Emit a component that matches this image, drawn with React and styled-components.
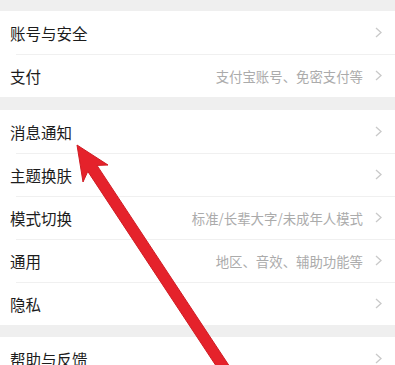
import React from "react";
import styled, { createGlobalStyle } from "styled-components";

const Global = createGlobalStyle`
  html, body { margin: 0; padding: 0; background: #efefef; }
  body { font-family: "Noto Sans CJK SC", "Noto Sans", sans-serif; overflow: hidden; }
`;

const Page = styled.div`
  position: relative;
  width: 395px;
  height: 365px;
  overflow: hidden;
  background: #efefef;
  display: flex;
  flex-direction: column;
`;

const Gap = styled.div`
  height: ${(p) => p.$h}px;
  flex: none;
`;

const Section = styled.div`
  background: #fff;
  display: flex;
  flex-direction: column;
  flex: none;
`;

const Row = styled.div`
  position: relative;
  height: 43px;
  display: flex;
  align-items: center;
  padding: 0 13px 0 10px;
  & + &::before {
    content: "";
    position: absolute;
    left: 16px;
    right: 0;
    top: 0;
    height: 1px;
    background: #f0f0f0;
  }
`;

const Title = styled.span`
  font-size: 15.5px;
  color: #1c1c1c;
  flex: 1;
  white-space: nowrap;
`;

const Value = styled.span`
  font-size: 13.4px;
  color: #ababab;
  white-space: nowrap;
  margin-right: 12px;
`;

const Chevron = () => (
  <svg width="7" height="11" viewBox="0 0 7 11">
    <polyline points="1,1 6,5.5 1,10" fill="none" stroke="#c9c9c9" strokeWidth="1.3" />
  </svg>
);

const Overlay = styled.svg`
  position: absolute;
  left: 0;
  top: 0;
  pointer-events: none;
`;

const Item = ({ title, value }) => (
  <Row>
    <Title>{title}</Title>
    {value && <Value>{value}</Value>}
    <Chevron />
  </Row>
);

export default function App() {
  return (
    <Page>
      <Global />
      <Gap $h={11} />
      <Section>
        <Item title="账号与安全" />
        <Item title="支付" value="支付宝账号、免密支付等" />
      </Section>
      <Gap $h={13} />
      <Section>
        <Item title="消息通知" />
        <Item title="主题换肤" />
        <Item title="模式切换" value="标准/长辈大字/未成年人模式" />
        <Item title="通用" value="地区、音效、辅助功能等" />
        <Item title="隐私" />
      </Section>
      <Gap $h={12} />
      <Section>
        <Item title="帮助与反馈" />
      </Section>
      <Overlay width="395" height="365" viewBox="0 0 395 365">
        <polygon
          points="77,145 108,165 97,165.4 234.6,374 225.4,380 87.8,171.4 83,182"
          fill="#e5222b"
          stroke="#d01c24"
          strokeWidth="1"
          strokeLinejoin="round"
        />
      </Overlay>
    </Page>
  );
}
